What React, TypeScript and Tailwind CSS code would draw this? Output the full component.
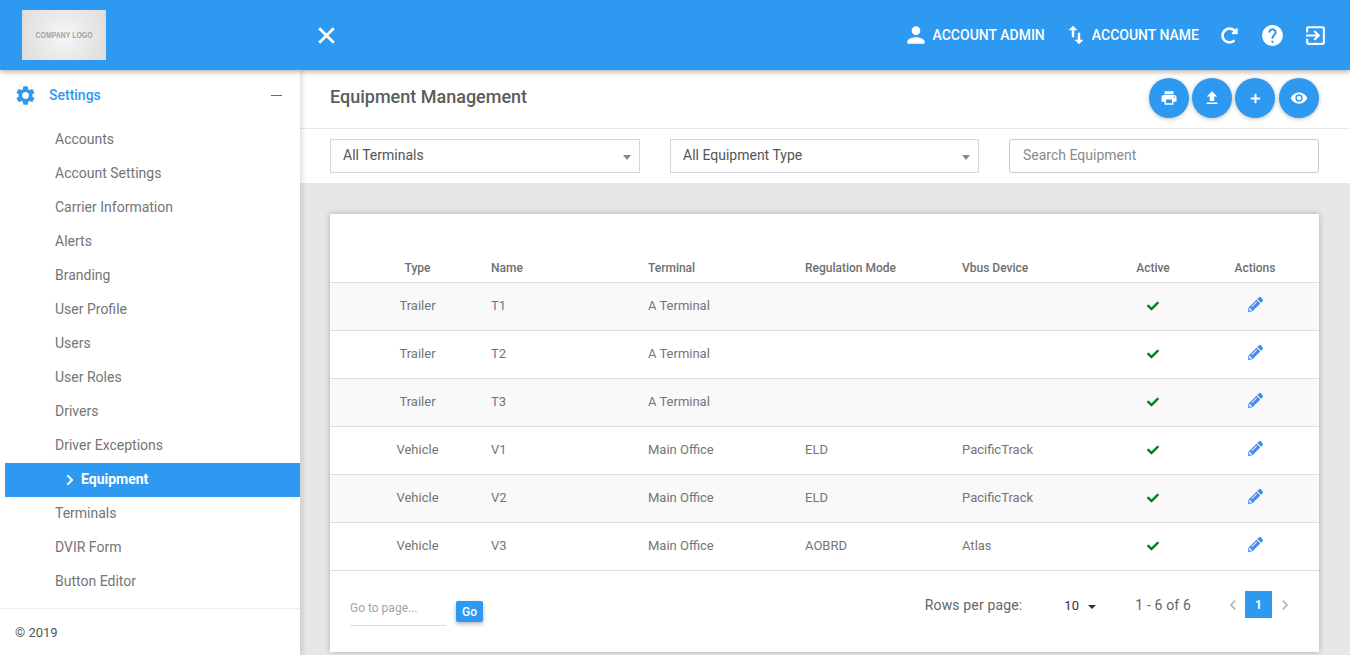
import { FaCheck, FaChevronRight, FaPencilAlt, FaPlus, FaRedoAlt } from 'react-icons/fa'
import {
  MdChevronLeft,
  MdChevronRight,
  MdExitToApp,
  MdFileUpload,
  MdHelp,
  MdPerson,
  MdPrint,
  MdSettings,
  MdVisibility,
} from 'react-icons/md'

const menuItems = [
  'Accounts',
  'Account Settings',
  'Carrier Information',
  'Alerts',
  'Branding',
  'User Profile',
  'Users',
  'User Roles',
  'Drivers',
  'Driver Exceptions',
  'Equipment',
  'Terminals',
  'DVIR Form',
  'Button Editor',
]

const rows = [
  { type: 'Trailer', name: 'T1', terminal: 'A Terminal', mode: '', device: '' },
  { type: 'Trailer', name: 'T2', terminal: 'A Terminal', mode: '', device: '' },
  { type: 'Trailer', name: 'T3', terminal: 'A Terminal', mode: '', device: '' },
  { type: 'Vehicle', name: 'V1', terminal: 'Main Office', mode: 'ELD', device: 'PacificTrack' },
  { type: 'Vehicle', name: 'V2', terminal: 'Main Office', mode: 'ELD', device: 'PacificTrack' },
  { type: 'Vehicle', name: 'V3', terminal: 'Main Office', mode: 'AOBRD', device: 'Atlas' },
]

const gridCols = 'grid grid-cols-[147px_157px_157px_157px_157px_68px_127px] pl-[14px]'

function Header() {
  return (
    <header className="relative z-20 flex h-[70px] shrink-0 items-center bg-[#2d99f0] pr-[22px] text-white shadow-[0_2px_5px_rgba(0,0,0,0.3)]">
      <div className="ml-[22px] flex h-[50px] w-[84px] items-center justify-center bg-[radial-gradient(circle,#f6f6f6,#dcdcdc)]">
        <span className="mt-[1px] scale-x-[0.77] font-['Liberation_Sans',sans-serif] text-[9px] font-bold whitespace-nowrap text-[#a3a3a3]">
          COMPANY LOGO
        </span>
      </div>
      <svg viewBox="0 0 24 24" className="ml-[208px] h-[25px] w-[25px]" fill="none" stroke="currentColor" strokeWidth="2.6">
        <path d="M5 5L19 19M19 5L5 19" />
      </svg>
      <div className="ml-auto flex items-center text-[14px] font-medium">
        <MdPerson className="text-[26px]" />
        <span className="ml-[4px]">ACCOUNT ADMIN</span>
        <svg viewBox="0 0 24 24" className="ml-[19px] h-[24px] w-[24px]" fill="currentColor" stroke="currentColor" strokeWidth="0.5">
          <path d="M9 3L5 6.99h3V14h2V6.99h3L9 3zm7 14.01V10h-2v7.01h-3L15 21l4-3.99h-3z" />
        </svg>
        <span className="ml-[4px]">ACCOUNT NAME</span>
        <FaRedoAlt className="ml-[22px] text-[17px]" />
        <MdHelp className="ml-[22px] text-[25px]" />
        <MdExitToApp className="ml-[18px] text-[25px]" />
      </div>
    </header>
  )
}

function Sidebar() {
  return (
    <aside className="relative z-10 flex w-[300px] shrink-0 flex-col bg-white shadow-[2px_0_6px_rgba(0,0,0,0.15)]">
      <div className="flex h-[50px] items-center pr-[18px] pl-[14px] text-[#2d99f0]">
        <MdSettings className="text-[23px]" />
        <span className="ml-[12px] text-[14px] font-medium">Settings</span>
        <span className="ml-auto h-px w-[11px] bg-[#666666]" />
      </div>
      <nav className="mt-[2px] flex-1">
        {menuItems.map((item) =>
          item === 'Equipment' ? (
            <div
              key={item}
              className="mt-[1px] mb-[-1px] ml-[5px] flex h-[34px] items-center bg-[#2d99f0] pl-[59px] text-[14px] font-bold text-white"
            >
              <FaChevronRight className="mr-[5px] text-[12px]" />
              <span className="mb-[2px]">{item}</span>
            </div>
          ) : (
            <div key={item} className="flex h-[34px] items-center pl-[55px] text-[14px] text-[#757575]">
              {item}
            </div>
          ),
        )}
      </nav>
      <div className="flex h-[47px] items-center border-t border-[#eeeeee] pt-[1px] pl-[15px] text-[13px] text-[#555555]">
        © 2019
      </div>
    </aside>
  )
}

function RoundButton({ children }: { children: React.ReactNode }) {
  return (
    <button className="flex h-[40px] w-[40px] items-center justify-center rounded-full bg-[#2d99f0] text-[18px] text-white shadow-[0_1px_4px_rgba(0,0,0,0.25)]">
      {children}
    </button>
  )
}

function FilterSelect({ label, width }: { label: string; width: string }) {
  return (
    <div className={`flex h-[34px] items-center justify-between border border-[#d5d5e0] pr-[8px] pb-[2px] pl-[12px] text-[14px] text-[#555555] ${width}`}>
      {label}
      <span className="mt-[4px] h-0 w-0 border-x-[4px] border-t-[5px] border-x-transparent border-t-[#888888]" />
    </div>
  )
}

function EquipmentTable() {
  return (
    <div className="mt-[31px] mr-[31px] ml-[30px] bg-white shadow-[0_0_6px_rgba(0,0,0,0.25)]">
      <div className={`${gridCols} h-[69px] items-end border-b border-[#dddddd] pb-[5px] text-[12px] font-medium text-[#6f6f6f]`}>
        <span className="text-center">Type</span>
        <span>Name</span>
        <span>Terminal</span>
        <span>Regulation Mode</span>
        <span>Vbus Device</span>
        <span className="text-center">Active</span>
        <span className="ml-[9px] text-center">Actions</span>
      </div>
      {rows.map((row, index) => (
        <div
          key={row.name}
          className={`${gridCols} h-[48px] items-center border-b border-[#dddddd] pb-[2px] text-[13px] text-[#757575] ${
            index % 2 === 0 ? 'bg-[#f9f9f9]' : 'bg-white'
          }`}
        >
          <span className="text-center">{row.type}</span>
          <span>{row.name}</span>
          <span>{row.terminal}</span>
          <span>{row.mode}</span>
          <span>{row.device}</span>
          <span className="flex justify-center">
            <FaCheck className="text-[12px] text-[#0a7d27]" />
          </span>
          <span className="mb-[2px] ml-[9px] flex justify-center">
            <FaPencilAlt className="text-[15px] text-[#3f8cf2]" />
          </span>
        </div>
      ))}
      <div className="flex h-[81px] items-start">
        <div className="mt-[24px] ml-[20px] h-[31px] w-[96px] border-b border-[#dddddd] text-[12px] leading-[26px] text-[#a5a5a5]">
          Go to page...
        </div>
        <button className="mt-[30px] ml-[10px] flex h-[21px] w-[27px] items-center justify-center rounded-[2px] bg-[#2d99f0] text-[12px] font-medium text-white shadow-[0_2px_4px_rgba(0,0,0,0.3)]">
          Go
        </button>
        <div className="mt-[20px] mr-[24px] ml-auto flex h-[27px] items-center text-[14px] tracking-[0.15px] text-[#666666]">
          <span className="mt-[2px]">Rows per page:</span>
          <span className="mt-[2px] ml-[42px] text-[13px] text-[#333333]">10</span>
          <span className="mt-[4px] ml-[9px] h-0 w-0 border-x-[4px] border-t-[4px] border-x-transparent border-t-[#333333]" />
          <span className="mt-[2px] ml-[39px]">1 - 6 of 6</span>
          <MdChevronLeft className="ml-[32px] text-[20px] text-[#b5b5b5]" />
          <span className="ml-[2px] flex h-[27px] w-[27px] items-center justify-center bg-[#2d99f0] text-[12px] font-bold text-white">
            1
          </span>
          <MdChevronRight className="ml-[3px] text-[20px] text-[#b5b5b5]" />
        </div>
      </div>
    </div>
  )
}

export default function App() {
  return (
    <div className="flex h-[655px] w-[1350px] flex-col overflow-hidden bg-[#e7e7e7] font-['Roboto',sans-serif]">
      <Header />
      <div className="flex min-h-0 flex-1">
        <Sidebar />
        <main className="min-w-0 flex-1">
          <div className="flex h-[59px] items-center justify-between border-b border-[#e8e8e8] bg-white pr-[31px] pb-[2px] pl-[30px]">
            <h1 className="mb-[4px] text-[18px] font-medium text-[#5c5c5c]">Equipment Management</h1>
            <div className="flex gap-[3px]">
              <RoundButton><MdPrint /></RoundButton>
              <RoundButton><MdFileUpload /></RoundButton>
              <RoundButton><FaPlus className="text-[11px]" /></RoundButton>
              <div className="ml-[1px]">
                <RoundButton><MdVisibility /></RoundButton>
              </div>
            </div>
          </div>
          <div className="flex h-[54px] items-center bg-white pl-[30px]">
            <FilterSelect label="All Terminals" width="w-[310px]" />
            <div className="ml-[30px]">
              <FilterSelect label="All Equipment Type" width="w-[309px]" />
            </div>
            <div className="ml-[30px] flex h-[34px] w-[310px] items-center rounded-[3px] border border-[#cccccc] pb-[1px] pl-[13px] text-[14px] text-[#8a8a8a]">
              Search Equipment
            </div>
          </div>
          <EquipmentTable />
        </main>
      </div>
    </div>
  )
}
